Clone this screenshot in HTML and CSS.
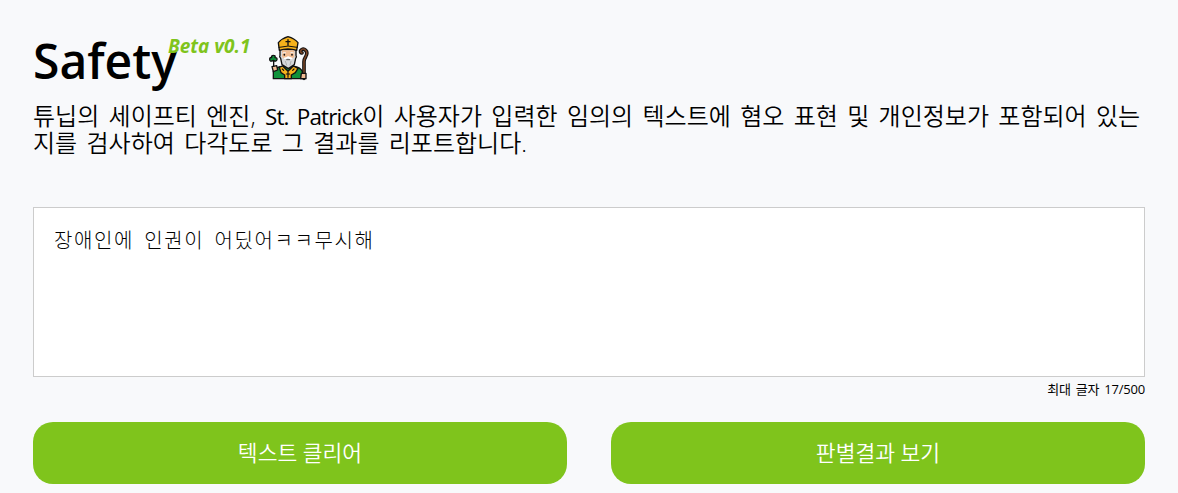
FILE: index.html
```html
<!DOCTYPE html>
<html lang="ko">
<head>
  <meta charset="UTF-8" />
  <meta name="viewport" content="width=device-width, initial-scale=1.0" />
  <title>Safety</title>
  <link rel="stylesheet" href="styles.css">
</head>
<body>
  <div class="container">
    <div class="header">
      <h1>Safety</h1>
      <span class="version">Beta v0.1</span>
      <svg class="logo" viewBox="21 15 123 138" stroke="#111" stroke-width="4" stroke-linejoin="round" stroke-linecap="round">
        <!-- staff -->
        <path d="M126 145V95Q126 88 131 80Q138 68 131 61Q123 53 116 62Q115 68 120 69" fill="none" stroke-width="11" />
        <path d="M126 145V95Q126 88 131 80Q138 68 131 61Q123 53 116 62Q115 68 120 69" fill="none" stroke="#7a4526" stroke-width="4.5" />
        <!-- robe -->
        <path d="M34 146V124Q40 112 58 109H98Q115 112 121 124V146Z" fill="#10923b" />
        <path d="M52 112L62 108L78 124L94 108L108 115L100 128L88 135V146H68V135L57 128Z" fill="#f5b21b" />
        <path d="M78 126V142M73 132H83M61 117L65 121M96 117L92 121" fill="none" stroke-width="3.5" />
        <!-- hands -->
        <path d="M30 110L44 107L47 120L34 125Z" fill="#f1bd94" />
        <path d="M118 130H132V146H116Z" fill="#f1bd94" />
        <!-- head and beard -->
        <path d="M54 59H102V76Q105 81 101 85L97 104L79 116L60 104L56 85Q51 81 54 76Z" fill="#d6d8da" />
        <path d="M60 61H97V80L89 86H67L60 80Z" fill="#f1bd94" stroke="none" />
        <path d="M62 69Q66 65 71 68M86 68Q91 65 95 69" fill="none" stroke="#eee" stroke-width="3" />
        <path d="M67 74V75M90 74V75" stroke-width="5" />
        <path d="M78 80L66 86Q63 100 79 110Q94 100 91 86Z" fill="#d6d8da" stroke="none" />
        <path d="M68 85Q74 85 78 81Q83 85 89 85" fill="none" stroke="#fff" stroke-width="5" />
        <path d="M74 89H83" fill="none" stroke="#555" stroke-width="3" />
        <path d="M70 94L74 105M87 94L84 105" fill="none" stroke="#999" stroke-width="2" />
        <!-- mitre -->
        <path d="M52 61L49 38Q60 25 78 20Q97 25 108 38L104 61Q78 52 52 61Z" fill="#f5b21b" />
        <path d="M51 52Q78 44 106 52" fill="none" stroke-width="3" />
        <path d="M78 29V46M72 35H84" fill="none" stroke-width="4" />
        <!-- clover -->
        <path d="M35 93V108" fill="none" />
        <path d="M34 91Q23 97 23 88Q23 81 29 83Q28 75 35 76Q41 76 39 83Q46 82 45 89Q43 97 34 91Z" fill="#10923b" />
      </svg>
    </div>
    <p class="description">튜닙의 세이프티 엔진, <span class="name">St. Patrick</span>이 사용자가 입력한 임의의 텍스트에 혐오 표현 및 개인정보가 포함되어 있는<br>지를 검사하여 다각도로 그 결과를 리포트합니다.</p>

    <textarea id="text" maxlength="500" spellcheck="false">장애인에 인권이 어딨어ㅋㅋ무시해</textarea>
    <div class="count">최대 글자 <span id="length">17</span>/500</div>

    <div class="buttons">
      <button onclick="clearText()">텍스트 클리어</button>
      <button>판별결과 보기</button>
    </div>
  </div>

  <script>
    const text = document.getElementById('text');

    function updateCount() {
      document.getElementById('length').innerText = text.value.length;
    }

    function clearText() {
      text.value = '';
      updateCount();
    }

    text.addEventListener('input', updateCount);
  </script>
</body>
</html>
```

FILE: styles.css
```css
* {
  box-sizing: border-box;
}
body {
  margin: 0;
  background-color: #f8f9fb;
  color: #000;
  font-family: "Open Sans", "Noto Sans CJK KR", sans-serif;
}
.container {
  padding: 27px 33px 0;
}
.header {
  display: flex;
  align-items: flex-start;
  height: 75px;
}
h1 {
  margin: 0;
  font-size: 48px;
  line-height: 68px;
  font-weight: 600;
}
.version {
  margin: 6px 0 0 -9px;
  color: #7fc41c;
  font-size: 19px;
  line-height: 26px;
  font-weight: 700;
  font-style: italic;
}
.logo {
  width: 41px;
  height: 46px;
  margin: 8px 0 0 19px;
}
.description {
  margin: 0;
  font-size: 24px;
  line-height: 27px;
  font-weight: 350;
  word-spacing: 3.1px;
  white-space: nowrap;
}
.name {
  font-size: 22.5px;
  line-height: 1;
  letter-spacing: -0.85px;
  font-weight: 400;
}
textarea {
  display: block;
  width: 100%;
  height: 170px;
  margin-top: 51px;
  padding: 18px 20px;
  border: 1px solid #ccc;
  background-color: #fff;
  color: #000;
  font-family: "Noto Sans CJK KR", sans-serif;
  font-size: 20px;
  line-height: 28px;
  font-weight: 300;
  letter-spacing: 1.6px;
  word-spacing: 3px;
  resize: none;
  outline: none;
}
.count {
  height: 45px;
  font-size: 13px;
  line-height: 24px;
  letter-spacing: -0.2px;
  word-spacing: 1.8px;
  text-align: right;
}
.buttons {
  display: grid;
  grid-template-columns: 1fr 1fr;
  gap: 44px;
}
button {
  height: 62px;
  padding: 0 0 3px;
  border: none;
  border-radius: 20px;
  background-color: #7fc41c;
  color: white;
  font-family: inherit;
  font-size: 21.5px;
  font-weight: 350;
  cursor: pointer;
}
```
